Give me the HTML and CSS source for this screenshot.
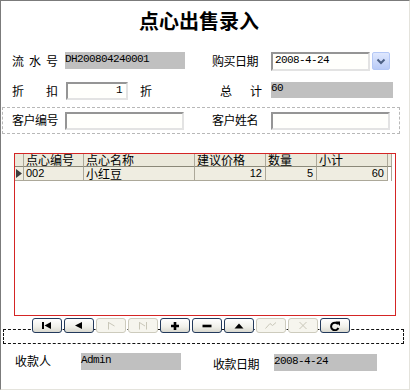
FILE: index.html
```html
<!DOCTYPE html>
<html lang="zh-CN">
<head>
  <meta charset="UTF-8">
  <meta name="viewport" content="width=device-width, initial-scale=1.0">
  <title>点心出售录入</title>
  <link rel="stylesheet" href="styles.css">
</head>
<body>
  <div class="window">
    <h1>点心出售录入</h1>

    <!-- Order info -->
    <div class="row row-serial">
      <div class="group">
        <span class="label">流 水 号</span>
        <span class="readonly serial">DH200804240001</span>
      </div>
      <div class="group">
        <span class="label label-4">购买日期</span>
        <span class="input date">2008-4-24</span>
        <span class="combo-btn">
          <svg width="16" height="16" viewBox="0 0 16 16"><path d="M4.5 6.5 L8 10 L11.5 6.5" fill="none" stroke="#4d6185" stroke-width="2"/></svg>
        </span>
      </div>
    </div>

    <div class="row row-discount">
      <div class="group">
        <span class="label">折 扣</span>
        <span class="input discount">1</span>
        <span class="unit">折</span>
      </div>
      <div class="group">
        <span class="label label-total">总 计</span>
        <span class="readonly total">60</span>
      </div>
    </div>

    <div class="customer-box">
      <div class="group">
        <span class="label label-4">客户编号</span>
        <span class="input customer"></span>
      </div>
      <div class="group">
        <span class="label label-4">客户姓名</span>
        <span class="input customer"></span>
      </div>
    </div>

    <!-- Detail grid -->
    <div class="grid-frame">
      <div class="grid">
        <div class="cell head"></div>
        <div class="cell head">点心编号</div>
        <div class="cell head">点心名称</div>
        <div class="cell head">建议价格</div>
        <div class="cell head">数量</div>
        <div class="cell head">小计</div>
        <div class="cell head tail"></div>

        <div class="cell row-cell indicator">
          <svg width="6" height="9" viewBox="0 0 6 9"><polygon points="0,0 6,4.5 0,9" fill="#3c3c3c"/></svg>
        </div>
        <div class="cell row-cell num">002</div>
        <div class="cell row-cell">小红豆</div>
        <div class="cell row-cell num right">12</div>
        <div class="cell row-cell num right">5</div>
        <div class="cell row-cell num right">60</div>
        <div class="cell row-cell tail blank"></div>
      </div>
    </div>

    <div class="nav">
      <span class="nav-btn"><svg width="12" height="9" viewBox="0 0 12 9"><rect x="1" y="1" width="2" height="7" fill="#000"/><polygon points="10,1 3.5,4.5 10,8" fill="#000"/></svg></span>
      <span class="nav-btn"><svg width="12" height="9" viewBox="0 0 12 9"><polygon points="9,1 2,4.5 9,8" fill="#000"/></svg></span>
      <span class="nav-btn disabled"><svg width="12" height="9" viewBox="0 0 12 9"><path d="M3.5 1 V8.5 M3.5 1.5 L9.5 5" fill="none" stroke="#c9c7b9" stroke-width="1"/></svg></span>
      <span class="nav-btn disabled"><svg width="12" height="9" viewBox="0 0 12 9"><path d="M2.5 1 V8.5 M2.5 1.5 L8 5 M9.5 1 V8.5" fill="none" stroke="#c9c7b9" stroke-width="1"/></svg></span>
      <span class="nav-btn"><svg width="12" height="10" viewBox="0 0 12 10"><path d="M6 1 V9 M2 5 H10" fill="none" stroke="#000" stroke-width="2.6"/></svg></span>
      <span class="nav-btn"><svg width="12" height="10" viewBox="0 0 12 10"><path d="M1.5 5 H10.5" fill="none" stroke="#000" stroke-width="2.6"/></svg></span>
      <span class="nav-btn"><svg width="12" height="9" viewBox="0 0 12 9"><polygon points="1.5,7.5 6,2.5 10.5,7.5" fill="#000"/></svg></span>
      <span class="nav-btn disabled"><svg width="14" height="9" viewBox="0 0 14 9"><path d="M1.5 7.5 L6 2.5 L8.5 4.5 L12 1.5" fill="none" stroke="#c9c7b9" stroke-width="1"/></svg></span>
      <span class="nav-btn disabled"><svg width="12" height="9" viewBox="0 0 12 9"><path d="M2.5 1 L9.5 8 M9.5 1 L2.5 8" fill="none" stroke="#c9c7b9" stroke-width="1"/></svg></span>
      <span class="nav-btn"><svg width="12" height="10" viewBox="0 0 12 10"><path d="M9 3.2 A3.8 3.8 0 1 0 9.4 7" fill="none" stroke="#000" stroke-width="2"/><polygon points="6.5,0.5 11,0.5 11,5" fill="#000"/></svg></span>
    </div>
    <div class="dash-bar"></div>

    <!-- Footer -->
    <div class="footer">
      <span class="label label-cashier">收款人</span>
      <span class="readonly cashier">Admin</span>
      <span class="label label-4 label-paydate">收款日期</span>
      <span class="readonly paydate">2008-4-24</span>
    </div>
  </div>
</body>
</html>
```

FILE: styles.css
```css
/* Global Styles */
* {
  margin: 0;
  padding: 0;
  box-sizing: border-box;
}

body {
  font-family: "Noto Sans CJK SC", sans-serif;
  font-size: 12px;
  color: #000;
  background: #fff;
}

.window {
  width: 410px;
  height: 390px;
  background: #fff;
  border-left: 1px solid #7b7b7b;
  border-top: 1px solid #7b7b7b;
  border-right: 1px solid #e4e3dc;
  border-bottom: 1px solid #e4e3dc;
}

h1 {
  margin-top: 9px;
  height: 22px;
  line-height: 22px;
  font-size: 20px;
  font-weight: bold;
  text-align: center;
  padding-right: 12px;
}

/* Form rows */
.row {
  display: flex;
  padding-left: 11px;
}

.row-serial {
  margin-top: 20px;
  height: 20px;
}

.row-discount {
  margin-top: 10px;
  height: 18px;
}

.group {
  display: flex;
  align-items: flex-start;
  width: 200px;
  flex-shrink: 0;
}

.label {
  display: inline-block;
  width: 46px;
  line-height: 17px;
  text-align: justify;
  text-align-last: justify;
}

.label-4 {
  white-space: nowrap;
  letter-spacing: -0.5px;
}

.row-discount .label {
  line-height: 18px;
}

.label-total {
  width: 42px;
  margin-left: 8px;
}

.readonly {
  display: inline-block;
  background: #c0c0c0;
  font-family: "Liberation Mono", monospace;
  font-size: 11px;
  letter-spacing: -0.6px;
  line-height: 13px;
}

.input {
  display: inline-block;
  background: #fffffc;
  border: 2px solid;
  border-color: #959595 #e3e3e3 #e3e3e3 #959595;
  font-family: "Liberation Mono", monospace;
  font-size: 11px;
  letter-spacing: -0.6px;
  line-height: 13px;
  padding-left: 2px;
}

.serial {
  margin-left: 7px;
  width: 120px;
  height: 17px;
  padding-top: 1px;
}

.date {
  margin-left: 13px;
  width: 99px;
  height: 19px;
}

.combo-btn {
  margin-left: 2px;
  width: 18px;
  height: 18px;
  display: flex;
  align-items: center;
  justify-content: center;
  border: 1px solid #b4c8f6;
  border-radius: 2px;
  background: linear-gradient(#dfe8fe, #b9cbf7);
}

.discount {
  margin-left: 8px;
  width: 62px;
  height: 18px;
  text-align: right;
  padding-right: 4px;
}

.unit {
  margin-left: 12px;
  line-height: 18px;
}

.total {
  margin-left: 9px;
  width: 122px;
  height: 16px;
}

/* Customer block */
.customer-box {
  display: flex;
  margin-top: 7px;
  margin-left: 1px;
  width: 398px;
  height: 27px;
  padding: 4px 0 0 9px;
  border: 1px dashed #b8b8b8;
}

.customer-box .label {
  line-height: 16px;
}

.customer {
  margin-left: 7px;
  width: 119px;
  height: 18px;
}

.customer-box .group + .group .customer {
  margin-left: 13px;
}

/* Detail grid */
.grid-frame {
  margin-top: 19px;
  margin-left: 13px;
  width: 382px;
  height: 163px;
  border: 1px solid #d42525;
}

.grid {
  display: grid;
  grid-template-columns: 9px 60px 111px 71px 51px 71px 4px;
}

.cell {
  border-right: 1px solid #aca899;
  border-bottom: 1px solid #aca899;
  padding-left: 2px;
  white-space: nowrap;
}

.head {
  height: 13px;
  line-height: 12px;
  background: #ebe9db;
  border-bottom-color: #8a8878;
}

.row-cell {
  height: 14px;
  line-height: 13px;
  background: #efede1;
}

.indicator {
  padding-left: 1px;
  display: flex;
  align-items: center;
}

.num {
  font-family: "Liberation Sans", sans-serif;
  font-size: 11px;
}

.right {
  text-align: right;
  padding-right: 3px;
}

.tail {
  padding: 0;
}

.blank {
  background: #fff;
  border-bottom: none;
}

/* Record navigation */
.nav {
  position: relative;
  z-index: 1;
  display: flex;
  gap: 2px;
  margin-top: 2px;
  padding-left: 31px;
  height: 15px;
}

.nav-btn {
  width: 30px;
  height: 15px;
  display: flex;
  align-items: center;
  justify-content: center;
  border: 1px solid #233a5c;
  border-radius: 3px;
  background: linear-gradient(#ffffff, #f0f0ea 60%, #d9d8cf);
}

.nav-btn.disabled {
  border-color: #cdcbbd;
  background: #f6f5ee;
}

.dash-bar {
  margin-top: -4px;
  margin-left: 2px;
  width: 401px;
  height: 15px;
  border: 1px dashed #111;
}

/* Footer */
.footer {
  display: flex;
  align-items: flex-start;
  margin-top: 9px;
  padding-left: 14px;
}

.label-cashier {
  width: 37px;
  line-height: 16px;
  text-align: left;
  text-align-last: auto;
}

.cashier {
  margin-left: 29px;
  width: 100px;
  height: 17px;
  padding-top: 1px;
}

.label-paydate {
  width: auto;
  margin-left: 32px;
  margin-top: 2px;
  line-height: 17px;
}

.paydate {
  margin-left: 15px;
  margin-top: 1px;
  width: 103px;
  height: 17px;
  padding-top: 1px;
}
```
